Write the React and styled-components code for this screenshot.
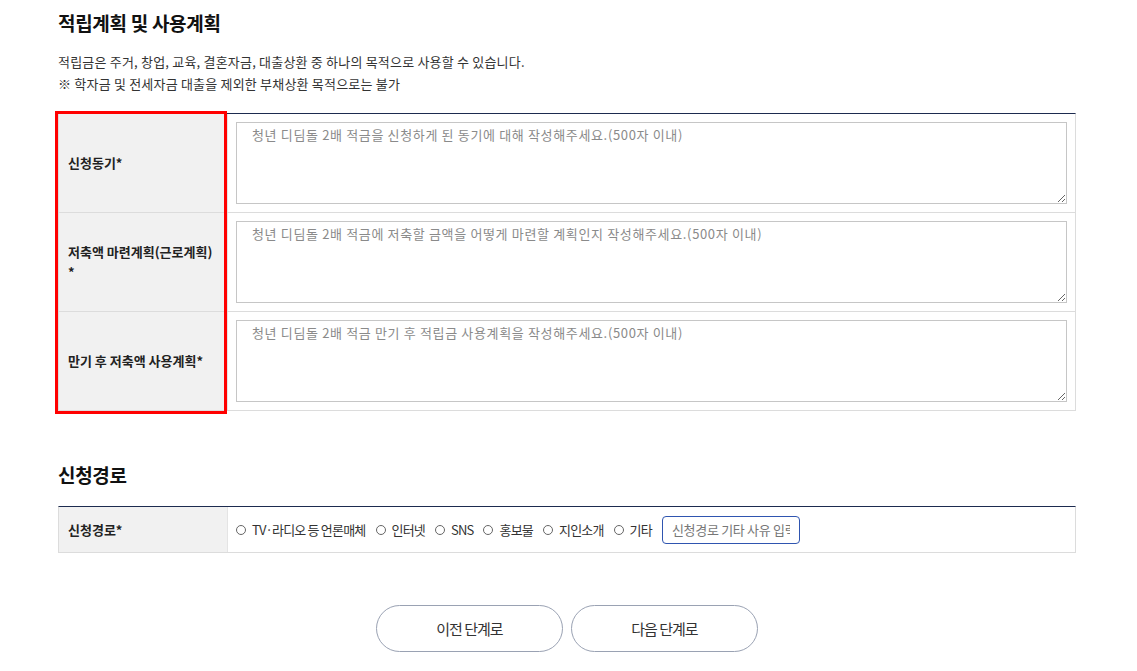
import styled, { createGlobalStyle } from "styled-components";

const GlobalStyle = createGlobalStyle`
    body {
        margin: 0;
        background: #fff;
        font-family: "Noto Sans CJK KR", "Noto Sans", sans-serif;
        color: #222;
    }
`

const plans = [
    { label: <>신청동기*</>, placeholder: "청년 디딤돌 2배 적금을 신청하게 된 동기에 대해 작성해주세요.(500자 이내)" },
    { label: <>저축액 마련계획(근로계획)<br />*</>, placeholder: "청년 디딤돌 2배 적금에 저축할 금액을 어떻게 마련할 계획인지 작성해주세요.(500자 이내)" },
    { label: <>만기 후 저축액 사용계획*</>, placeholder: "청년 디딤돌 2배 적금 만기 후 적립금 사용계획을 작성해주세요.(500자 이내)" },
]

const routes = ["TV·라디오 등 언론매체", "인터넷", "SNS", "홍보물", "지인소개", "기타"]

const App = () => {
    return (
        <Page>
            <GlobalStyle />
            <Title>적립계획 및 사용계획</Title>
            <Desc>
                적립금은 주거, 창업, 교육, 결혼자금, 대출상환 중 하나의 목적으로 사용할 수 있습니다.<br />
                ※ 학자금 및 전세자금 대출을 제외한 부채상환 목적으로는 불가
            </Desc>

            <Table>
                {plans.map((p, i) => (
                    <Row key={i} tall>
                        <Label>{p.label}</Label>
                        <Cell>
                            <TextBox placeholder={p.placeholder} />
                        </Cell>
                    </Row>
                ))}
                <Highlight />
            </Table>

            <Title second>신청경로</Title>
            <Table compact>
                <Row>
                    <Label>신청경로*</Label>
                    <Cell inline>
                        {routes.map((r) => (
                            <Option key={r}>
                                <Radio />
                                {r}
                            </Option>
                        ))}
                        <EtcInput placeholder="신청경로 기타 사유 입력" />
                    </Cell>
                </Row>
            </Table>

            <Buttons>
                <StepButton>이전 단계로</StepButton>
                <StepButton>다음 단계로</StepButton>
            </Buttons>
        </Page>
    )
}

export default App

const Page = styled.div`
    width: 1018px;
    padding: 10px 0 20px 58px;
`

const Title = styled.h2`
    margin: ${(p) => (p.second ? "51px" : "0")} 0 0;
    font-size: 19px;
    line-height: 26px;
    font-weight: 700;
    letter-spacing: -0.3px;
    color: #111;
`

const Desc = styled.p`
    margin: 15px 0 0;
    font-size: 13px;
    line-height: 22px;
    letter-spacing: 0.2px;
    color: #333;
`

const Table = styled.div`
    position: relative;
    margin-top: 18px;
    border-top: 1px solid #1d2b4f;
    border-left: 1px solid #dcdcdc;
    border-right: 1px solid #dcdcdc;
`

const Row = styled.div`
    display: grid;
    grid-template-columns: 169px 1fr;
    min-height: ${(p) => (p.tall ? "98px" : "45px")};
    border-bottom: 1px solid #dcdcdc;
`

const Label = styled.div`
    display: flex;
    align-items: center;
    padding: 0 9px;
    background: #f1f1f1;
    border-right: 1px solid #e4e4e4;
    font-size: 13px;
    line-height: 20px;
    font-weight: 700;
    color: #222;
`

const Cell = styled.div`
    display: flex;
    align-items: center;
    padding: ${(p) => (p.inline ? "0 8px" : "7px 8px 8px 8px")};
    gap: ${(p) => (p.inline ? "10px" : "0")};
`

const TextBox = styled.textarea`
    box-sizing: border-box;
    width: 100%;
    height: 82px;
    padding: 3px 15px;
    border: 1px solid #c6c6c6;
    font-family: "Noto Sans CJK KR", sans-serif;
    font-size: 13px;
    line-height: 18px;
    letter-spacing: 0.65px;
    color: #333;
    outline: none;
    &::placeholder {
        color: #8a8a8a;
    }
`

const Highlight = styled.div`
    position: absolute;
    left: -4px;
    top: -3px;
    width: 166px;
    height: 297px;
    border: 3px solid #ff0000;
    pointer-events: none;
`

const Option = styled.label`
    display: flex;
    align-items: center;
    gap: 6px;
    font-size: 13px;
    letter-spacing: -0.8px;
    color: #333;
    white-space: nowrap;
`

const Radio = styled.span`
    box-sizing: border-box;
    width: 10px;
    height: 10px;
    border: 1px solid #666;
    border-radius: 50%;
`

const EtcInput = styled.input`
    box-sizing: border-box;
    width: 138px;
    height: 28px;
    padding: 0 9px;
    border: 1px solid #2f55b0;
    border-radius: 4px;
    font-family: "Noto Sans CJK KR", sans-serif;
    font-size: 13px;
    letter-spacing: -0.3px;
    outline: none;
    &::placeholder {
        color: #777;
    }
`

const Buttons = styled.div`
    display: flex;
    justify-content: center;
    gap: 8px;
    margin: 52px 0 0 -58px;
    width: 1134px;
`

const StepButton = styled.button`
    width: 187px;
    height: 47px;
    border: 1px solid #9aa2b3;
    border-radius: 24px;
    background: #fff;
    font-family: "Noto Sans CJK KR", sans-serif;
    font-size: 15px;
    letter-spacing: -1px;
    color: #333;
    cursor: pointer;
`
